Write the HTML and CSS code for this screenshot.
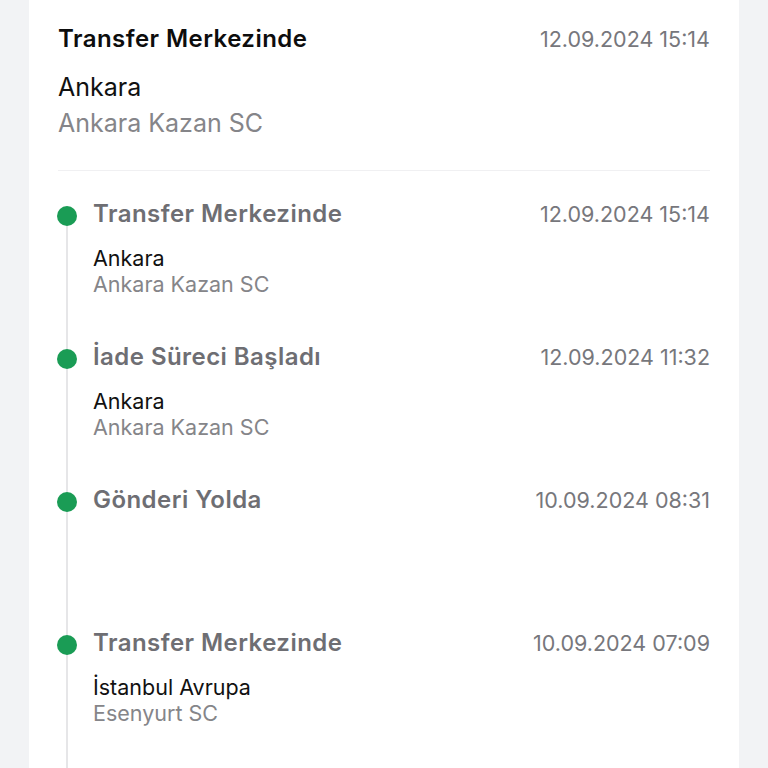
FILE: index.html
```html
<!DOCTYPE html>
<html lang="tr">
<head>
<meta charset="utf-8">
<link rel="stylesheet" href="styles.css">
</head>
<body>
<div class="card">
  <div class="header">
    <div class="row">
      <div class="h-title">Transfer Merkezinde</div>
      <div class="date">12.09.2024 15:14</div>
    </div>
    <div class="h-city">Ankara</div>
    <div class="h-branch">Ankara Kazan SC</div>
  </div>
  <div class="timeline">
    <div class="item">
      <span class="dot"></span>
      <div class="row">
        <div class="t-title">Transfer Merkezinde</div>
        <div class="date">12.09.2024 15:14</div>
      </div>
      <div class="subs">
        <div class="t-city">Ankara</div>
        <div class="t-branch">Ankara Kazan SC</div>
      </div>
    </div>
    <div class="item">
      <span class="dot"></span>
      <div class="row">
        <div class="t-title">İade Süreci Başladı</div>
        <div class="date">12.09.2024 11:32</div>
      </div>
      <div class="subs">
        <div class="t-city">Ankara</div>
        <div class="t-branch">Ankara Kazan SC</div>
      </div>
    </div>
    <div class="item">
      <span class="dot"></span>
      <div class="row">
        <div class="t-title">Gönderi Yolda</div>
        <div class="date">10.09.2024 08:31</div>
      </div>
      <div class="subs"></div>
    </div>
    <div class="item">
      <span class="dot"></span>
      <div class="row">
        <div class="t-title">Transfer Merkezinde</div>
        <div class="date">10.09.2024 07:09</div>
      </div>
      <div class="subs">
        <div class="t-city">İstanbul Avrupa</div>
        <div class="t-branch">Esenyurt SC</div>
      </div>
    </div>
  </div>
</div>
</body>
</html>
```
FILE: styles.css
```css
* { box-sizing: border-box; }
html, body { margin: 0; padding: 0; }
body {
  background: #f2f3f5;
  font-family: Inter, "Noto Sans", sans-serif;
  height: 768px;
  overflow: hidden;
}
.card {
  margin: 0 29px;
  background: #ffffff;
  padding: 0 29px;
  min-height: 900px;
}
.row {
  display: flex;
  justify-content: space-between;
  align-items: baseline;
}
.header {
  padding-top: 25px;
  padding-bottom: 29px;
  border-bottom: 1px solid #f0f0f2;
}
.h-title {
  font-size: 24px;
  line-height: 28px;
  font-weight: 600;
  letter-spacing: 0.45px;
  color: #0d0d0d;
}
.date {
  font-size: 21.5px;
  line-height: 28px;
  color: #77777c;
}
.h-city {
  margin-top: 16px;
  font-size: 25px;
  line-height: 36px;
  color: #111111;
}
.h-branch {
  font-size: 25px;
  line-height: 36px;
  color: #858589;
}
.timeline {
  position: relative;
  padding-top: 29px;
}
.timeline::before {
  content: "";
  position: absolute;
  left: 8px;
  top: 45px;
  bottom: 0;
  width: 2px;
  background: #e6e6e8;
}
.item {
  position: relative;
  padding-left: 35px;
  padding-bottom: 46px;
}
.dot {
  position: absolute;
  left: -1px;
  top: 6px;
  width: 20px;
  height: 20px;
  border-radius: 50%;
  background: #1a9c55;
}
.t-title {
  font-size: 24px;
  line-height: 28px;
  font-weight: 600;
  letter-spacing: 0.45px;
  color: #6e6e73;
}
.subs {
  margin-top: 17px;
  min-height: 52px;
}
.t-city {
  font-size: 21.5px;
  line-height: 26px;
  color: #111111;
}
.t-branch {
  font-size: 21.5px;
  line-height: 26px;
  color: #858589;
}
```
